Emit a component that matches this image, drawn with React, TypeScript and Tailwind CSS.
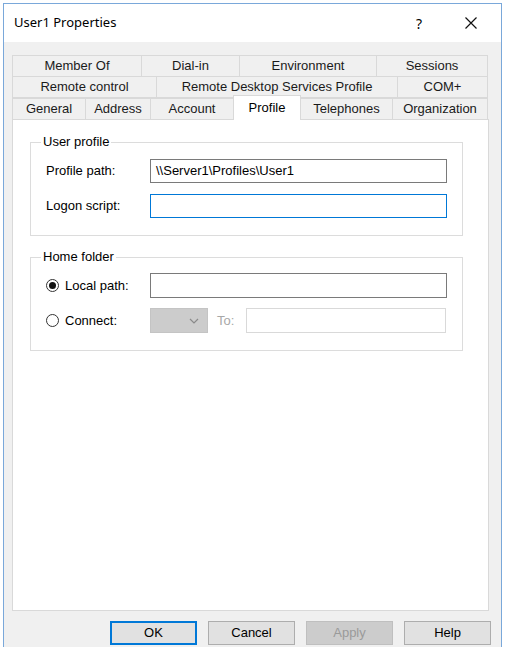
import React from "react";

const rowOne = [
  { label: "Member Of", w: "w-[130px]" },
  { label: "Dial-in", w: "w-[99px]" },
  { label: "Environment", w: "w-[138px]" },
  { label: "Sessions", w: "w-[112px]" },
];

const rowTwo = [
  { label: "Remote control", w: "w-[145px]" },
  { label: "Remote Desktop Services Profile", w: "w-[242px]" },
  { label: "COM+", w: "w-[91px]" },
];

const rowThree = [
  { label: "General", w: "w-[74px]" },
  { label: "Address", w: "w-[66px]" },
  { label: "Account", w: "w-[84px]" },
  { label: "Profile", w: "w-[68px]", active: true },
  { label: "Telephones", w: "w-[93px]" },
  { label: "Organization", w: "w-[96px]" },
];

function Tab({ label, w }: { label: string; w: string }) {
  return (
    <div
      className={`${w} h-[22px] flex items-center justify-center border border-[#d9d9d9] -ml-px first:ml-0 bg-[#f0f0f0] text-[13px] text-[#1a1a1a]`}
    >
      {label}
    </div>
  );
}

function Radio({ checked }: { checked?: boolean }) {
  return (
    <span className="w-[13px] h-[13px] rounded-full border border-[#333] bg-white flex items-center justify-center shrink-0">
      {checked && <span className="w-[7px] h-[7px] rounded-full bg-[#111]" />}
    </span>
  );
}

export default function App() {
  return (
    <div
      className="w-[505px] h-[647px] bg-white overflow-hidden pt-[3px] px-[3px]"
      style={{ fontFamily: '"Liberation Sans", Arial, sans-serif' }}
    >
      <div className="h-[660px] border border-[#7aa8da] flex flex-col">
        {/* title bar */}
        <div className="h-[38px] bg-white flex items-center pl-[10px] pr-[24px] shrink-0">
          <span
            className="text-[13px] text-black"
            style={{ fontFamily: '"Noto Sans", "Open Sans", sans-serif' }}
          >
            User1 Properties
          </span>
          <span
            className="ml-auto text-[14px] text-black mr-[43px]"
            style={{ fontFamily: '"Noto Sans", sans-serif' }}
          >
            ?
          </span>
          <svg width="12" height="12" viewBox="0 0 12 12">
            <path d="M0.5 0.5 L11.5 11.5 M11.5 0.5 L0.5 11.5" stroke="#111" strokeWidth="1.2" />
          </svg>
        </div>

        {/* body */}
        <div className="flex-1 bg-[#f0f0f0] pl-[8px] pt-[13px]">
          <div className="flex">
            {rowOne.map((t) => (
              <Tab key={t.label} label={t.label} w={t.w} />
            ))}
          </div>
          <div className="flex -mt-px">
            {rowTwo.map((t) => (
              <Tab key={t.label} label={t.label} w={t.w} />
            ))}
          </div>
          <div className="flex items-end -mt-px h-[23px] relative z-10">
            {rowThree.map((t) =>
              t.active ? (
                <div
                  key={t.label}
                  className={`${t.w} h-[25px] -ml-px bg-white border border-b-0 border-[#d9d9d9] flex justify-center pt-[2px] text-[13px] text-black`}
                >
                  {t.label}
                </div>
              ) : (
                <div
                  key={t.label}
                  className={`${t.w} h-[22px] -ml-px first:ml-0 border border-[#d9d9d9] bg-[#f0f0f0] flex items-center justify-center text-[13px] text-[#1a1a1a]`}
                >
                  {t.label}
                </div>
              )
            )}
          </div>

          {/* panel */}
          <div className="w-[477px] h-[492px] -mt-px bg-white border border-[#d9d9d9] pt-[15px]">
            <fieldset className="ml-[17px] w-[433px] h-[101px] border border-[#dcdcdc] px-[15px]">
              <legend className="ml-[-5px] px-[2px] text-[13px] leading-[14px] text-black">
                User profile
              </legend>
              <div className="flex items-center mt-[10px]">
                <span className="w-[104px] text-[13px] text-black">Profile path:</span>
                <div className="w-[297px] h-[24px] border border-[#7a7a7a] bg-white flex items-center px-[5px] text-[13px] text-black">
                  \\Server1\Profiles\User1
                </div>
              </div>
              <div className="flex items-center mt-[11px]">
                <span className="w-[104px] text-[13px] text-black">Logon script:</span>
                <div className="w-[297px] h-[24px] border border-[#0078d7] bg-white" />
              </div>
            </fieldset>

            <fieldset className="ml-[17px] mt-[14px] w-[433px] h-[101px] border border-[#dcdcdc] px-[15px]">
              <legend className="ml-[-5px] px-[2px] text-[13px] leading-[14px] text-black">
                Home folder
              </legend>
              <div className="flex items-center mt-[9px]">
                <div className="w-[104px] flex items-center gap-[6px]">
                  <Radio checked />
                  <span className="text-[13px] text-black">Local path:</span>
                </div>
                <div className="w-[297px] h-[25px] border border-[#7a7a7a] bg-white" />
              </div>
              <div className="flex items-center mt-[10px]">
                <div className="w-[104px] flex items-center gap-[6px]">
                  <Radio />
                  <span className="text-[13px] text-black">Connect:</span>
                </div>
                <div className="w-[58px] h-[25px] bg-[#cccccc] border border-[#c4c4c4] flex items-center justify-end pr-[8px]">
                  <svg width="10" height="6" viewBox="0 0 10 6">
                    <path d="M1 1 L5 5 L9 1" stroke="#8a8a8a" strokeWidth="1.2" fill="none" />
                  </svg>
                </div>
                <span className="ml-[9px] w-[29px] text-[13px] text-[#a8a8a8]">To:</span>
                <div className="w-[200px] h-[25px] border border-[#d9d9d9] bg-white" />
              </div>
            </fieldset>
          </div>

          {/* buttons */}
          <div className="flex gap-[11px] ml-[98px] mt-[10px]">
            <div className="w-[87px] h-[24px] border-2 border-[#0078d7] bg-[#e1e1e1] flex items-center justify-center text-[13px] text-black">
              OK
            </div>
            <div className="w-[87px] h-[24px] border border-[#adadad] bg-[#e1e1e1] flex items-center justify-center text-[13px] text-black">
              Cancel
            </div>
            <div className="w-[87px] h-[24px] border border-[#bfbfbf] bg-[#cccccc] flex items-center justify-center text-[13px] text-[#9a9a9a]">
              Apply
            </div>
            <div className="w-[87px] h-[24px] border border-[#adadad] bg-[#e1e1e1] flex items-center justify-center text-[13px] text-black">
              Help
            </div>
          </div>
        </div>
      </div>
    </div>
  );
}
